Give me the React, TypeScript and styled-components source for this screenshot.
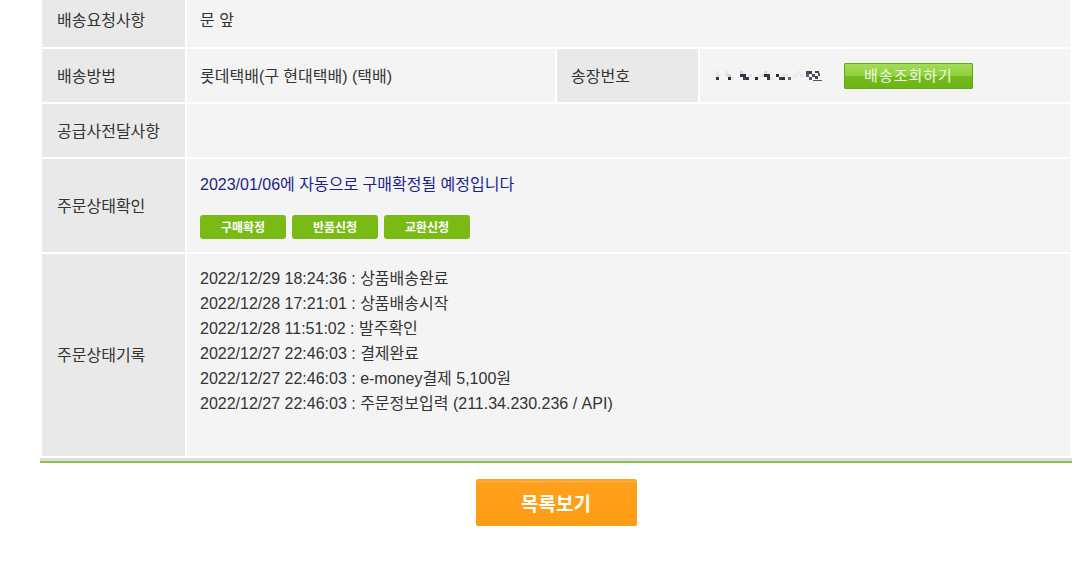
import React from "react";
import styled, { createGlobalStyle } from "styled-components";

const Global = createGlobalStyle`
  html, body { margin: 0; padding: 0; background: #ffffff; }
  body {
    font-family: "Liberation Sans", "Noto Sans CJK KR", sans-serif;
    color: #333333;
    overflow: hidden;
  }
`;

const Page = styled.div`
  width: 1032px;
  margin-left: 40px;
  margin-top: -9px;
`;

const Table = styled.table`
  width: 1032px;
  table-layout: fixed;
  border-collapse: separate;
  border-spacing: 2px;
  background: #ffffff;
`;

const Row = styled.tr<{ $h: number }>`
  height: ${(p) => p.$h}px;
`;

const Th = styled.th`
  background: #e9e9e9;
  text-align: left;
  font-weight: normal;
  font-size: 16px;
  color: #333333;
  padding: 0 0 2px 15px;
  vertical-align: middle;
`;

const Th2 = styled(Th)`
  padding-left: 14px;
`;

const Td = styled.td<{ $top?: boolean; $pl?: number }>`
  background: #f4f4f4;
  font-size: 16px;
  color: #333333;
  padding: ${(p) => (p.$top ? "12px" : "0")} 0 ${(p) => (p.$top ? "0" : "2px")} ${(p) => p.$pl ?? 13}px;
  vertical-align: ${(p) => (p.$top ? "top" : "middle")};
`;

const StatusTd = styled(Td)`
  padding-top: 3px;
  padding-bottom: 0;
`;

const TrackWrap = styled.div`
  display: flex;
  align-items: center;
  gap: 21px;
  padding-top: 2px;
`;

const TrackButton = styled.button`
  width: 129px;
  height: 26px;
  padding: 0;
  border: 1px solid #62a814;
  border-radius: 1px;
  background: linear-gradient(to bottom, #a3dd55 0%, #8ed03c 48%, #74bb1c 52%, #6db515 100%);
  color: #eef8e2;
  font-family: "Liberation Sans", "Noto Sans CJK KR", sans-serif;
  font-size: 15px;
  letter-spacing: 1px;
  line-height: 24px;
  cursor: pointer;
`;

const Notice = styled.div`
  color: #1b1f8a;
  font-size: 16px;
  line-height: 18px;
  margin-bottom: 21px;
`;

const ActionBar = styled.div`
  display: flex;
  gap: 6px;
`;

const SmallButton = styled.button`
  width: 86px;
  height: 24px;
  padding: 0;
  border: none;
  border-radius: 3px;
  background: #79bb14;
  color: #ffffff;
  font-family: "Noto Sans CJK KR", sans-serif;
  font-weight: 700;
  font-size: 12px;
  line-height: 24px;
  cursor: pointer;
`;

const HistoryLine = styled.div`
  font-size: 16px;
  line-height: 25px;
  color: #333333;
`;

const BottomRule = styled.div`
  height: 3px;
  background: #dcdcdc;
  border-bottom: 2px solid #8fc04a;
`;

const Footer = styled.div`
  display: flex;
  justify-content: center;
  padding-top: 16px;
`;

const ListButton = styled.button`
  width: 161px;
  height: 47px;
  padding: 0;
  border: none;
  border-radius: 2px;
  background: linear-gradient(to bottom, #ffa21f 0%, #ffa21f 4%, #ffb347 5%, #ffa01c 9%, #ff9c14 100%);
  color: #ffffff;
  font-family: "Noto Sans CJK KR", sans-serif;
  font-weight: 700;
  font-size: 19px;
  cursor: pointer;
`;

const Mosaic: React.FC = () => {
  const blocks: [number, number, string][] = [
    [0, 0, "#f6e3ea"], [0, 3, "#eddde6"], [0, 6, "#3b2f38"], [3, 3, "#f4eef0"],
    [9, 0, "#ece5ee"], [9, 3, "#e7dde4"], [12, 3, "#d9d2dc"], [12, 6, "#2f2936"], [15, 6, "#efe6da"],
    [24, 0, "#cfd3dc"], [24, 3, "#3b3243"], [27, 3, "#2a3145"], [27, 6, "#4a4050"], [30, 6, "#3a3345"], [33, 3, "#e6dde0"],
    [39, 6, "#2c2838"], [42, 3, "#f1eae3"], [45, 3, "#e8dcd3"],
    [48, 0, "#d6dbe5"], [48, 3, "#2f3340"], [51, 3, "#3b3346"], [51, 6, "#3d3748"], [54, 6, "#e9e1e6"],
    [60, 3, "#2e2a3a"], [63, 6, "#403848"], [66, 6, "#2f2c3c"], [66, 3, "#f1e4d8"], [69, 3, "#ebe0d6"],
    [72, 6, "#6f6570"], [78, 3, "#e3e8ee"], [81, 0, "#e6ebf1"], [84, 3, "#dfe6ef"],
    [90, 0, "#4a4a66"], [93, 0, "#3b3a58"], [90, 3, "#5b5b78"], [96, 3, "#505070"], [93, 6, "#56566e"],
  ];
  return (
    <svg width="107" height="14" viewBox="0 0 107 14" aria-label="tracking number">
      {blocks.map(([x, y, c], i) => (
        <rect key={i} x={x} y={y + 2} width="3" height="3" fill={c} />
      ))}
      <rect x="99" y="2" width="4" height="2" fill="#444" />
      <rect x="102" y="4" width="2" height="3" fill="#555" />
      <rect x="99" y="7" width="3" height="3" fill="#444" />
      <rect x="97" y="11" width="9" height="1" fill="#555" />
    </svg>
  );
};

const history = [
  "2022/12/29 18:24:36 : 상품배송완료",
  "2022/12/28 17:21:01 : 상품배송시작",
  "2022/12/28 11:51:02 : 발주확인",
  "2022/12/27 22:46:03 : 결제완료",
  "2022/12/27 22:46:03 : e-money결제 5,100원",
  "2022/12/27 22:46:03 : 주문정보입력 (211.34.230.236 / API)",
];

export default function App() {
  return (
    <>
      <Global />
      <Page>
        <Table>
          <colgroup>
            <col style={{ width: 143 }} />
            <col style={{ width: 368 }} />
            <col style={{ width: 141 }} />
            <col style={{ width: 370 }} />
          </colgroup>
          <tbody>
            <Row $h={54}>
              <Th>배송요청사항</Th>
              <Td colSpan={3}>문 앞</Td>
            </Row>
            <Row $h={53}>
              <Th>배송방법</Th>
              <Td>롯데택배(구 현대택배) (택배)</Td>
              <Th2>송장번호</Th2>
              <Td $pl={16}>
                <TrackWrap>
                  <Mosaic />
                  <TrackButton>배송조회하기</TrackButton>
                </TrackWrap>
              </Td>
            </Row>
            <Row $h={53}>
              <Th>공급사전달사항</Th>
              <Td colSpan={3}></Td>
            </Row>
            <Row $h={93}>
              <Th>주문상태확인</Th>
              <StatusTd colSpan={3}>
                <Notice>2023/01/06에 자동으로 구매확정될 예정입니다</Notice>
                <ActionBar>
                  <SmallButton>구매확정</SmallButton>
                  <SmallButton>반품신청</SmallButton>
                  <SmallButton>교환신청</SmallButton>
                </ActionBar>
              </StatusTd>
            </Row>
            <Row $h={202}>
              <Th>주문상태기록</Th>
              <Td colSpan={3} $top>
                {history.map((h) => (
                  <HistoryLine key={h}>{h}</HistoryLine>
                ))}
              </Td>
            </Row>
          </tbody>
        </Table>
        <BottomRule />
        <Footer>
          <ListButton>목록보기</ListButton>
        </Footer>
      </Page>
    </>
  );
}
